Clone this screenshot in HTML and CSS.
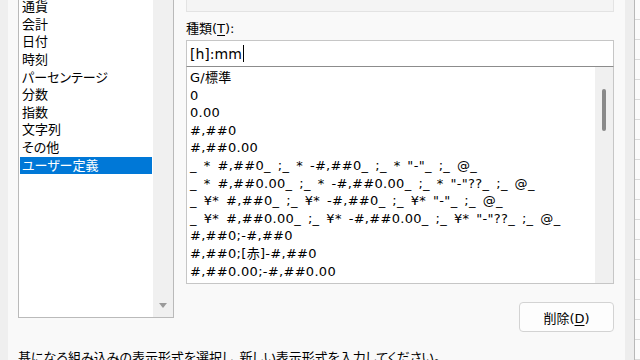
FILE: index.html
```html
<!DOCTYPE html>
<html lang="ja">
<head>
    <meta charset="utf-8">
    <title>セルの書式設定 - ユーザー定義</title>
    <link rel="stylesheet" href="styles.css">
</head>
<body>
    <div class="screen">
        <div class="frame-left"></div>
        <div class="dialog">
            <div class="panes">
                <!-- 分類 -->
                <div class="category">
                    <ul class="cat-items">
                        <li>標準</li>
                        <li>数値</li>
                        <li>通貨</li>
                        <li>会計</li>
                        <li>日付</li>
                        <li>時刻</li>
                        <li>パーセンテージ</li>
                        <li>分数</li>
                        <li>指数</li>
                        <li>文字列</li>
                        <li>その他</li>
                        <li class="selected">ユーザー定義</li>
                    </ul>
                    <div class="cat-scroll"><span class="arrow-down"></span></div>
                </div>
                <!-- 種類 -->
                <div class="detail">
                    <div class="sample"></div>
                    <label class="field-label">種類(<u>T</u>):</label>
                    <div class="type-input">[h]:mm<span class="caret"></span></div>
                    <div class="type-list">
                        <ul class="type-items">
                            <li>G/標準</li>
                            <li>0</li>
                            <li>0.00</li>
                            <li>#,##0</li>
                            <li>#,##0.00</li>
                            <li>_ * #,##0_ ;_ * -#,##0_ ;_ * "-"_ ;_ @_</li>
                            <li>_ * #,##0.00_ ;_ * -#,##0.00_ ;_ * "-"??_ ;_ @_</li>
                            <li>_ ¥* #,##0_ ;_ ¥* -#,##0_ ;_ ¥* "-"_ ;_ @_</li>
                            <li>_ ¥* #,##0.00_ ;_ ¥* -#,##0.00_ ;_ ¥* "-"??_ ;_ @_</li>
                            <li>#,##0;-#,##0</li>
                            <li>#,##0;[赤]-#,##0</li>
                            <li>#,##0.00;-#,##0.00</li>
                        </ul>
                        <div class="type-scroll"><span class="thumb"></span></div>
                    </div>
                    <div class="actions">
                        <button class="btn">削除(<u>D</u>)</button>
                    </div>
                </div>
            </div>
            <p class="hint">基になる組み込みの表示形式を選択し、新しい表示形式を入力してください。</p>
        </div>
        <div class="shadow"></div>
        <div class="sheet"></div>
    </div>
</body>
</html>
```

FILE: styles.css
```css
*{margin:0;padding:0;box-sizing:border-box;}
html,body{height:360px;overflow:hidden;}
body{font-family:"DejaVu Sans","Noto Sans CJK JP",sans-serif;font-size:13px;color:#000;font-feature-settings:"palt";background:#f0f0f0;}
ul{list-style:none;}
u{text-decoration:underline;text-underline-offset:2px;}

.screen{display:flex;height:360px;overflow:hidden;}
.frame-left{width:8px;background:#efefef;}
.dialog{width:617px;padding:0 11px 0 10px;background:#f9f9f9;}
.shadow{width:10px;background:#ededed;border-right:1px solid #b8b8b8;}
.sheet{flex:1;background:#fbfbfb repeating-linear-gradient(#fbfbfb 0,#fbfbfb 19px,#dadada 19px,#dadada 20px);}

.panes{display:grid;grid-template-columns:156px 428px;column-gap:12px;align-items:start;margin-top:-39px;}

/* 分類リスト */
.category{display:flex;height:357px;border:1px solid #bababa;background:#fff;}
.cat-items{flex:1;padding:1px;}
.cat-items li{height:17.6px;line-height:17.6px;padding-left:2px;white-space:nowrap;}
.cat-items li.selected{background:#0078d7;color:#fff;}
.cat-scroll{width:20px;display:flex;flex-direction:column;justify-content:flex-end;align-items:center;padding-bottom:9px;background:#f0f0f0;}
.arrow-down{width:0;height:0;border-left:4px solid transparent;border-right:4px solid transparent;border-top:5px solid #9a9a9a;}

/* 種類 */
.sample{height:51px;border:1px solid #e3e3e3;background:#f4f4f4;}
.field-label{display:block;margin-top:8px;line-height:17px;}
.type-input{display:flex;align-items:center;height:27px;margin-top:3px;padding-left:3px;border:1px solid #c6c6c6;border-bottom-color:#8c8c8c;background:#fff;font-size:14px;}
.caret{width:1px;height:17px;margin-left:1px;background:#000;}
.type-list{display:flex;height:217px;border:1px solid #c6c6c6;border-top:none;background:#fff;overflow:hidden;}
.type-items{flex:1;padding:2px 0 0 3px;overflow:hidden;}
.type-items li{height:17.6px;line-height:17.6px;white-space:nowrap;letter-spacing:0.3px;word-spacing:2.5px;}
.type-scroll{width:18px;display:flex;justify-content:center;background:#f0f0f0;}
.thumb{width:4px;height:42px;margin-top:22px;border-radius:2px;background:#8a8a8a;}

.actions{display:flex;justify-content:flex-end;margin-top:18px;}
.btn{width:95px;height:30px;border:1px solid #d3d3d3;border-radius:4px;background:#fdfdfd;font:inherit;color:#000;}

.hint{margin-top:17px;line-height:17px;white-space:nowrap;}
```
